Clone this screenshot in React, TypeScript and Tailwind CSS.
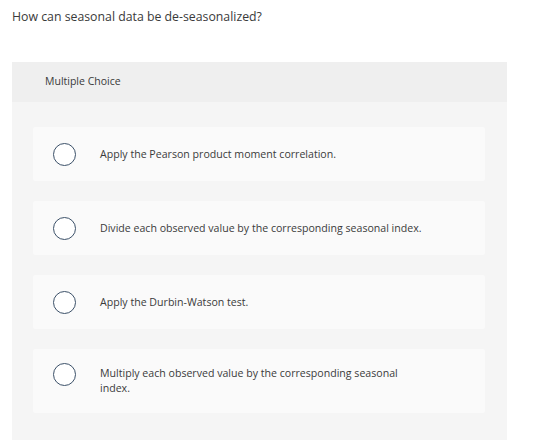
import React from 'react';

const options = [
  'Apply the Pearson product moment correlation.',
  'Divide each observed value by the corresponding seasonal index.',
  'Apply the Durbin-Watson test.',
  'Multiply each observed value by the corresponding seasonal index.',
];

function Radio() {
  return (
    <span className="block w-[23px] h-[23px] rounded-full border-[1.5px] border-[#3b5068] bg-white shrink-0" />
  );
}

export default function App() {
  return (
    <div className="w-[536px] h-[440px] bg-white overflow-hidden font-['Open_Sans',sans-serif] text-[#3a3a3a]">
      <p className="pl-[12px] pt-[9px] text-[12.3px] leading-[16px]">How can seasonal data be de-seasonalized?</p>

      <div className="ml-[12px] mt-[37px] w-[495px] h-[400px] bg-[#f5f5f5]">
        <div className="h-[40px] bg-[#efefef] flex items-center pl-[33px] text-[10.5px]">Multiple Choice</div>

        <div className="pt-[25px] pl-[21px] flex flex-col gap-[20px]">
          {options.map((text, i) => (
            <div
              key={i}
              className={`w-[452px] bg-[#fafafa] rounded-[2px] flex pl-[20px] ${i === 3 ? 'h-[64px] items-start pt-[14px]' : 'h-[54px] items-center'}`}
            >
              <Radio />
              <span className={`ml-[24px] max-w-[325px] text-[10.6px] leading-[15px] ${i === 3 ? 'mt-[3px]' : ''}`}>{text}</span>
            </div>
          ))}
        </div>
      </div>
    </div>
  );
}
